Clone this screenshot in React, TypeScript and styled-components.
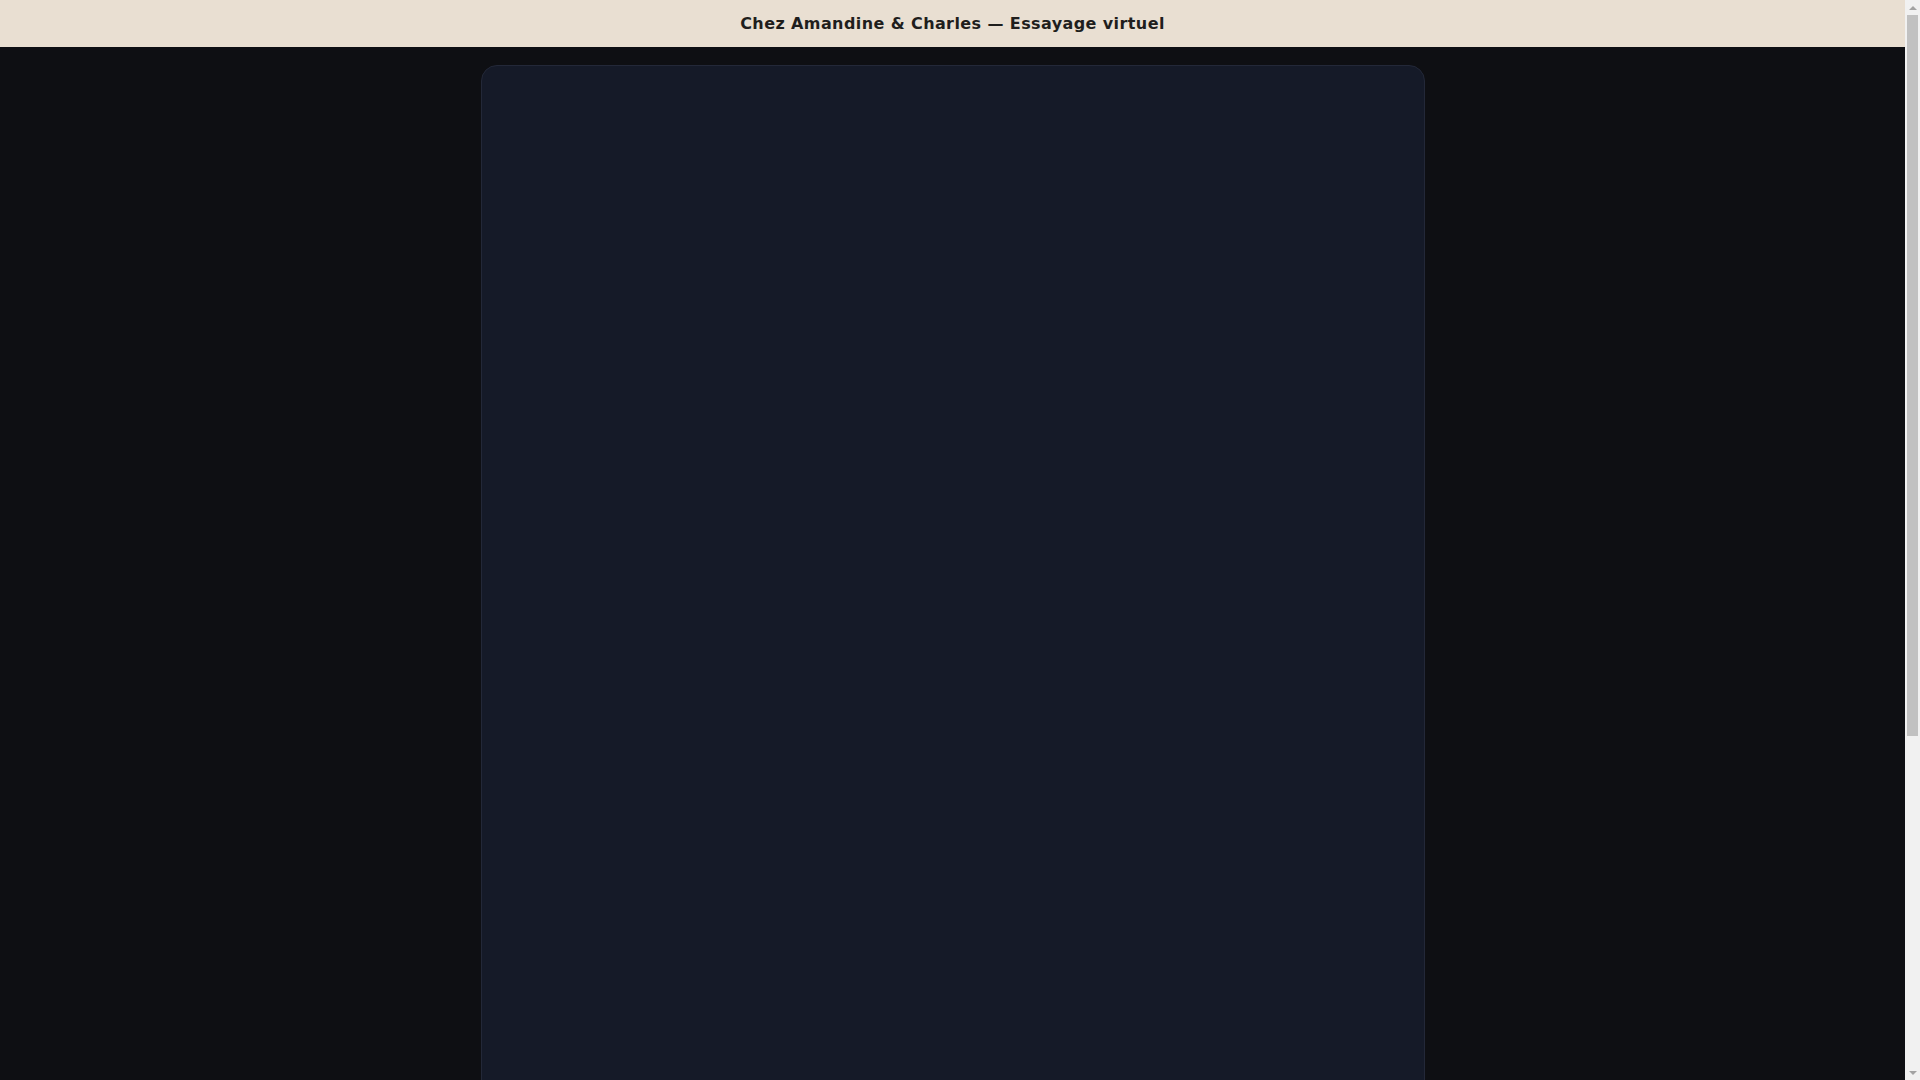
import React from 'react';
import styled, { createGlobalStyle } from 'styled-components';

const GlobalStyle = createGlobalStyle`
  html, body {
    margin: 0;
    padding: 0;
    height: 100%;
    overflow: hidden;
    background: #0e0f13;
    font-family: "DejaVu Sans", "Liberation Sans", sans-serif;
  }
  * {
    box-sizing: border-box;
  }
`;

const Shell = styled.div`
  display: flex;
  height: 100vh;
  background: #0e0f13;
`;

const Viewport = styled.div`
  flex: 1;
  min-width: 0;
  overflow: hidden;
`;

const Header = styled.header`
  height: 47px;
  background: #e9dfd2;
  color: #1f1e1d;
  display: flex;
  align-items: center;
  justify-content: center;
  font-weight: 700;
  font-size: 16px;
  letter-spacing: 0.4px;
`;

const Main = styled.main`
  display: flex;
  justify-content: center;
  padding: 18px 16px 18px;
`;

const Stage = styled.section`
  width: 944px;
  height: 1490px;
  background: #151a28;
  border: 1px solid #232838;
  border-radius: 16px;
`;

/* scrollbar look-alike, the page is taller than the window */
const Rail = styled.div`
  width: 15px;
  flex: none;
  background: #f1f1f1;
  display: flex;
  flex-direction: column;
  align-items: center;
`;

const Arrow = styled.div<{ $down?: boolean }>`
  height: 15px;
  width: 15px;
  flex: none;
  display: flex;
  align-items: center;
  justify-content: center;
  &::before {
    content: '';
    width: 0;
    height: 0;
    border-left: 4px solid transparent;
    border-right: 4px solid transparent;
    ${(p) =>
      p.$down
        ? 'border-top: 4px solid #a3a3a3;'
        : 'border-bottom: 4px solid #a3a3a3;'}
  }
`;

const Track = styled.div`
  flex: 1;
  width: 100%;
  display: flex;
  justify-content: center;
`;

const Thumb = styled.div`
  width: 11px;
  height: 721px;
  background: #c1c1c1;
`;

const App: React.FC = () => {
  return (
    <Shell>
      <GlobalStyle />
      <Viewport>
        <Header>Chez Amandine &amp; Charles — Essayage virtuel</Header>
        <Main>
          <Stage />
        </Main>
      </Viewport>
      <Rail>
        <Arrow />
        <Track>
          <Thumb />
        </Track>
        <Arrow $down />
      </Rail>
    </Shell>
  );
};

export default App;
